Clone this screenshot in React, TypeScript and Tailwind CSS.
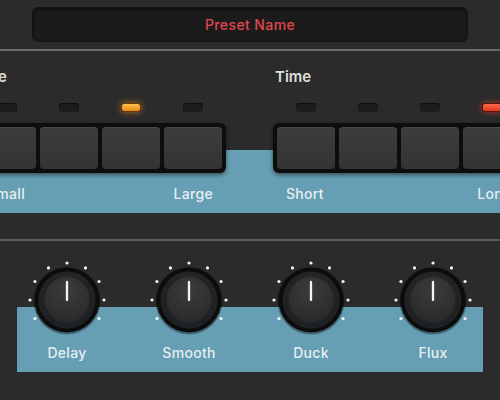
import React from 'react';

const FONT = { fontFamily: 'Inter, "Noto Sans", sans-serif' };

type Section = {
  title: string;
  active: number;
  ledColor: string;
  low: string;
  high: string;
};

const sections: Section[] = [
  { title: 'Size', active: 2, ledColor: 'orange', low: 'Small', high: 'Large' },
  { title: 'Time', active: 3, ledColor: 'red', low: 'Short', high: 'Long' },
];

const knobs = ['Delay', 'Smooth', 'Duck', 'Flux'];

function Led({ on, color }: { on: boolean; color: string }) {
  if (!on) {
    return <div className="h-[9px] w-[20px] rounded-[3px] bg-[#1c1c1c] shadow-[inset_0_1px_1px_rgba(0,0,0,0.6)]" />;
  }
  if (color === 'orange') {
    return (
      <div className="h-[9px] w-[20px] rounded-[3px] border border-[#6a3a08] bg-gradient-to-b from-[#ffbf4a] to-[#e58a1a] shadow-[0_0_6px_rgba(255,160,40,0.6)]" />
    );
  }
  return (
    <div className="h-[9px] w-[20px] rounded-[3px] border border-[#5a1408] bg-gradient-to-b from-[#ff6a4a] to-[#e0321e] shadow-[0_0_6px_rgba(255,70,40,0.6)]" />
  );
}

function Knob() {
  const dots = [];
  for (let i = 0; i < 9; i++) {
    const a = ((-120 + i * 30) * Math.PI) / 180;
    dots.push(
      <circle key={i} cx={40 + 37 * Math.sin(a)} cy={40 - 37 * Math.cos(a)} r={1.6} fill="#f4f4f4" />
    );
  }
  return (
    <svg width="80" height="80" viewBox="0 0 80 80" className="block">
      <defs>
        <radialGradient id="rim" cx="50%" cy="40%" r="60%">
          <stop offset="0%" stopColor="#2c2c2c" />
          <stop offset="100%" stopColor="#1c1f22" />
        </radialGradient>
        <radialGradient id="face" cx="50%" cy="30%" r="70%">
          <stop offset="0%" stopColor="#3c3c3c" />
          <stop offset="100%" stopColor="#2a2a2a" />
        </radialGradient>
      </defs>
      {dots}
      <circle cx="40" cy="41" r="33.5" fill="rgba(0,0,0,0.35)" />
      <circle cx="40" cy="40" r="32.5" fill="#0c0c0c" />
      <circle cx="40" cy="40" r="28" fill="url(#rim)" stroke="#23282b" strokeWidth="1" />
      <circle cx="40" cy="40.5" r="23.5" fill="#1f2427" />
      <circle cx="40" cy="39.5" r="22.5" fill="url(#face)" />
      <line x1="40" y1="22" x2="40" y2="40" stroke="#f4f4f4" strokeWidth="2.3" strokeLinecap="round" />
    </svg>
  );
}

export default function App() {
  return (
    <div className="relative h-[400px] w-[500px] overflow-hidden bg-[#2b2b2b]" style={FONT}>
      {/* Preset header */}
      <div className="h-[49px] px-[32px] pt-[7px]">
        <div className="flex h-[35px] items-center justify-center rounded-[6px] border border-[#141414] bg-[#1b1b1b] shadow-[inset_0_1px_3px_rgba(0,0,0,0.6)]">
          <span className="text-[14px] font-medium tracking-[0.4px] text-[#e0474f]">Preset Name</span>
        </div>
      </div>
      <div className="h-[2px] bg-[#6b6b6b]" />

      {/* Switch sections */}
      <div className="relative mt-[15px]">
        <div className="relative z-10 ml-[-26px] flex gap-[47px]">
          {sections.map((s) => (
            <div key={s.title} className="w-[252px] shrink-0">
              <div className="pl-[2px] pt-[1px] text-[15px] font-semibold leading-[20px] text-[#dedede]">{s.title}</div>
              <div className="mt-[16px] flex gap-[4px] px-[4px]">
                {[0, 1, 2, 3].map((i) => (
                  <div key={i} className="flex w-[58px] justify-center">
                    <Led on={i === s.active} color={s.ledColor} />
                  </div>
                ))}
              </div>
              <div className="mt-[11px] flex gap-[4px] rounded-[6px] bg-[#0d0d0d] p-[4px] shadow-[0_2px_4px_rgba(0,0,0,0.5)]">
                {[0, 1, 2, 3].map((i) => (
                  <div
                    key={i}
                    className="h-[42px] w-[58px] rounded-[4px] bg-gradient-to-b from-[#3d3d3d] to-[#333333] shadow-[inset_0_1px_0_rgba(255,255,255,0.06)]"
                  />
                ))}
              </div>
            </div>
          ))}
        </div>
        <div className="-mt-[23px] h-[63px] bg-[#669fb3] pt-[35px]">
          <div className="ml-[-26px] flex gap-[47px]">
            {sections.map((s) => (
              <div key={s.title} className="flex w-[252px] shrink-0 justify-between px-[13px] text-[14px] font-medium leading-[18px] tracking-[0.3px] text-[#e6eef1]">
                <span>{s.low}</span>
                <span>{s.high}</span>
              </div>
            ))}
          </div>
        </div>
      </div>

      <div className="mt-[26px] h-[2px] bg-[#5c5c5c]" />

      {/* Knobs */}
      <div className="mx-[17px] mt-[66px] h-[65px] bg-[#669fb3]">
        <div className="mx-[-11px] grid grid-cols-4">
          {knobs.map((k) => (
            <div key={k} className="flex flex-col items-center">
              <div className="-mt-[47px]">
                <Knob />
              </div>
              <div className="mt-[4px] text-[14px] font-medium leading-[18px] tracking-[0.3px] text-[#e6eef1]">{k}</div>
            </div>
          ))}
        </div>
      </div>
    </div>
  );
}
